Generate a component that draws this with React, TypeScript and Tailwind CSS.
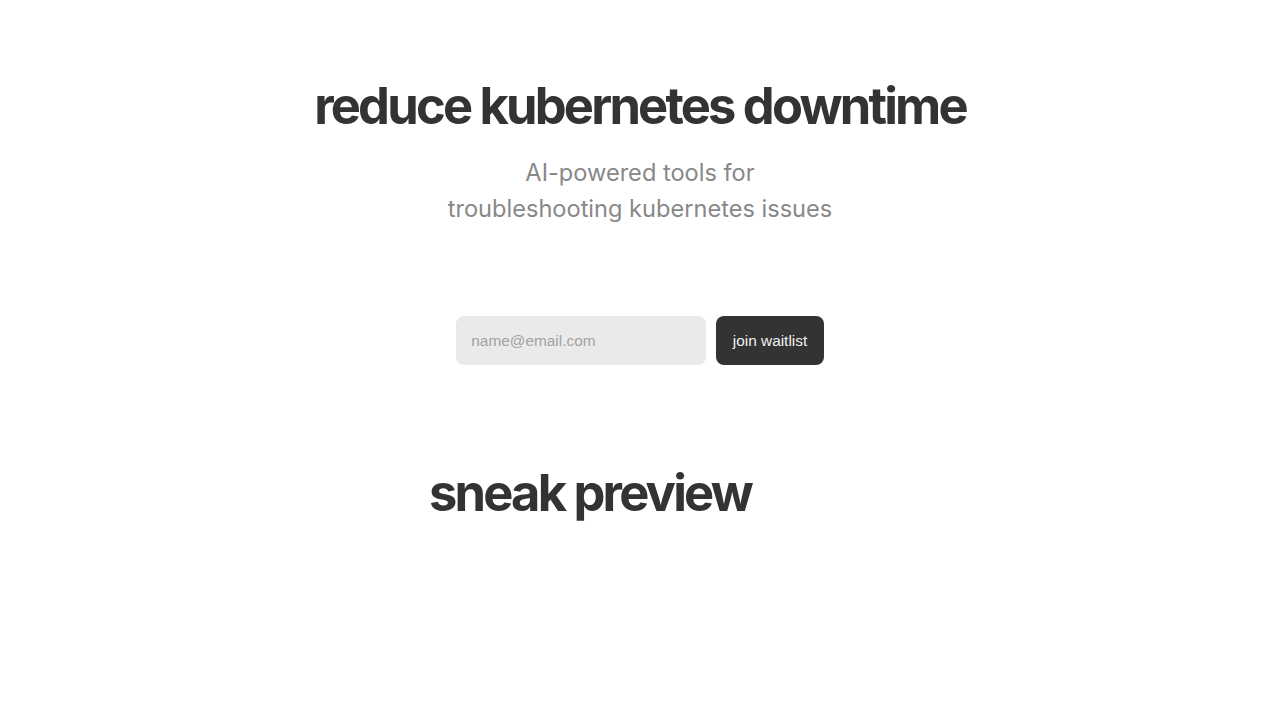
import React from "react";

const inter = { fontFamily: "Inter, 'Noto Sans', sans-serif" };

export default function App() {
  return (
    <div className="min-h-screen w-full bg-white flex flex-col items-center" style={inter}>
      <h1 className="mt-[74px] text-[50.6px] leading-[64px] font-bold tracking-[-0.055em] text-[#333333]">
        reduce kubernetes downtime
      </h1>
      <p className="mt-[17px] text-center text-[23.6px] leading-[36px] text-[#888888]">
        AI-powered tools for
        <br />
        troubleshooting kubernetes issues
      </p>
      <form
        className="mt-[89px] flex gap-[10px]"
        style={{ fontFamily: "'Liberation Sans', Arial, sans-serif" }}
        onSubmit={(e) => e.preventDefault()}
      >
        <input
          type="email"
          placeholder="name@email.com"
          className="w-[250px] h-[49px] rounded-lg bg-[#eaeaea] px-[15px] text-[15.4px] text-[#333] placeholder:text-[#a3a3a3] outline-none"
        />
        <button
          type="submit"
          className="h-[49px] px-[16.5px] rounded-lg bg-[#333333] text-[15.4px] text-[#f0f0f0]"
        >
          join waitlist
        </button>
      </form>
      <div className="mt-[96px] w-[420px] pl-[10px] -ml-[22px]">
        <h2 className="text-[50.6px] leading-[64px] font-bold tracking-[-0.055em] text-[#333333]">
          sneak preview
        </h2>
      </div>
    </div>
  );
}
